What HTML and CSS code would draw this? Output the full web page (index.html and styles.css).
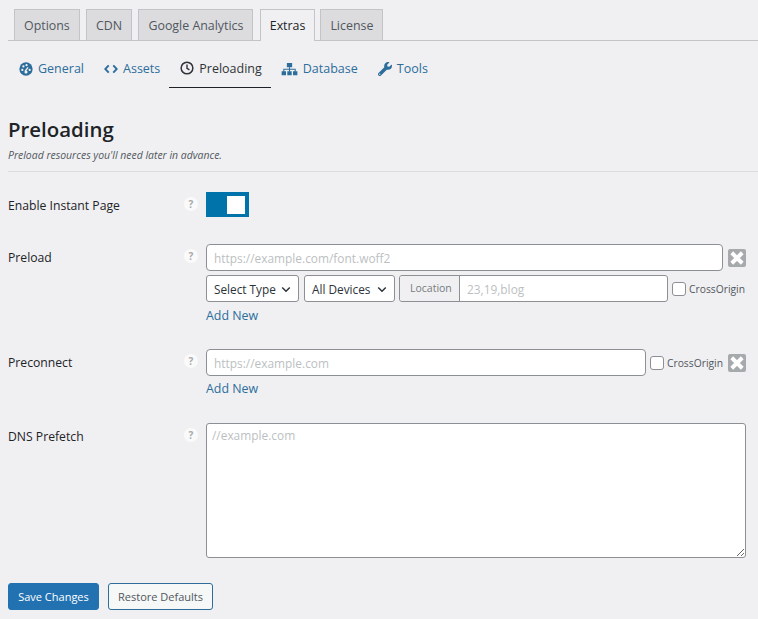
FILE: index.html
```html
<!DOCTYPE html>
<html>
<head>
  <meta charset="utf-8">
  <title>Preloading</title>
  <link rel="stylesheet" href="styles.css">
</head>
<body>
  <div class="tabs">
    <a class="tab">Options</a>
    <a class="tab">CDN</a>
    <a class="tab">Google Analytics</a>
    <a class="tab active">Extras</a>
    <a class="tab">License</a>
  </div>

  <div class="subnav">
    <a class="subnav-item">
      <svg class="icon" viewBox="0 0 16 16"><circle cx="8" cy="8" r="7.6" fill="currentColor"/><circle cx="3.800" cy="9" r="1.300" fill="#f0f0f1"/><circle cx="5" cy="5" r="1.300" fill="#f0f0f1"/><circle cx="8.600" cy="3.600" r="1.300" fill="#f0f0f1"/><circle cx="12.200" cy="9" r="1.300" fill="#f0f0f1"/><path d="M7 10.500l3.400-4.300" stroke="#f0f0f1" stroke-width="1.600"/><circle cx="8" cy="11.400" r="1.800" fill="#f0f0f1"/></svg>
      General
    </a>
    <a class="subnav-item">
      <svg class="icon" viewBox="0 0 16 16"><path d="M5.400 3.800L1.400 8l4 4.200M10.600 3.800l4 4.200-4 4.200" fill="none" stroke="currentColor" stroke-width="2.200"/></svg>
      Assets
    </a>
    <a class="subnav-item current">
      <svg class="icon" viewBox="0 0 16 16"><circle cx="8" cy="8" r="6.700" fill="none" stroke="currentColor" stroke-width="1.700"/><path d="M8 4v4.300l2.800 1.800" fill="none" stroke="currentColor" stroke-width="1.600"/></svg>
      Preloading
    </a>
    <a class="subnav-item">
      <svg class="icon icon-wide" viewBox="0 0 18 16"><path d="M6 1h6v5H6zM0 10.500h5V15H0zM6.500 10.500h5V15h-5zM13 10.500h5V15h-5z" fill="currentColor"/><path d="M2.500 11V8.200h13V11M9 6v5" fill="none" stroke="currentColor" stroke-width="1.200"/></svg>
      Database
    </a>
    <a class="subnav-item">
      <svg class="icon" viewBox="0 0 512 512"><path fill="currentColor" d="M507.73 109.1c-2.24-9.03-13.54-12.09-20.12-5.51l-74.36 74.36-67.88-11.31-11.31-67.88 74.36-74.36c6.62-6.62 3.43-17.9-5.66-20.16-47.38-11.74-99.55.91-136.58 37.93-39.64 39.64-50.55 97.1-34.05 147.2L18.74 402.76c-24.99 24.99-24.99 65.51 0 90.5 24.99 24.99 65.51 24.99 90.5 0l213.21-213.21c50.12 16.71 107.47 5.68 147.37-34.22 37.07-37.07 49.7-89.32 37.91-136.73zM64 472c-13.25 0-24-10.75-24-24 0-13.26 10.75-24 24-24s24 10.74 24 24c0 13.25-10.75 24-24 24z"/></svg>
      Tools
    </a>
  </div>

  <div class="section-head">
    <h2>Preloading</h2>
    <p>Preload resources you'll need later in advance.</p>
  </div>

  <div class="row row-toggle">
    <div class="row-label"><span>Enable Instant Page</span><i class="help">?</i></div>
    <div class="switch"><span class="knob"></span></div>
  </div>

  <div class="row row-preload">
    <div class="row-label"><span>Preload</span><i class="help">?</i></div>
    <div class="fields">
      <div class="line">
        <input class="text grow" type="text" placeholder="https://example.com/font.woff2">
        <span class="remove"><svg viewBox="0 0 12 12"><path d="M2.500 2.500l7 7M9.500 2.500l-7 7"/></svg></span>
      </div>
      <div class="line">
        <span class="select select-type">Select Type<svg viewBox="0 0 12 8"><path d="M1.500 1.500L6 6l4.500-4.500"/></svg></span>
        <span class="select select-device">All Devices<svg viewBox="0 0 12 8"><path d="M1.500 1.500L6 6l4.500-4.500"/></svg></span>
        <span class="location">
          <span class="location-label">Location</span>
          <input class="location-input" type="text" placeholder="23,19,blog">
        </span>
        <label class="cross"><span class="box"></span>CrossOrigin</label>
      </div>
      <a class="add">Add New</a>
    </div>
  </div>

  <div class="row row-preconnect">
    <div class="row-label"><span>Preconnect</span><i class="help">?</i></div>
    <div class="fields">
      <div class="line line-tight">
        <input class="text grow" type="text" placeholder="https://example.com">
        <label class="cross"><span class="box"></span>CrossOrigin</label>
        <span class="remove"><svg viewBox="0 0 12 12"><path d="M2.500 2.500l7 7M9.500 2.500l-7 7"/></svg></span>
      </div>
      <a class="add">Add New</a>
    </div>
  </div>

  <div class="row row-dns">
    <div class="row-label"><span>DNS Prefetch</span><i class="help">?</i></div>
    <textarea class="dns" placeholder="//example.com"></textarea>
  </div>

  <div class="actions">
    <button class="btn btn-primary">Save Changes</button>
    <button class="btn btn-secondary">Restore Defaults</button>
  </div>
</body>
</html>
```

FILE: styles.css
```css
* {
  box-sizing: border-box;
}

body {
  margin: 0;
  height: 619px;
  overflow: hidden;
  background: #f0f0f2;
  color: #3c434a;
  font-family: "Open Sans", "Noto Sans", sans-serif;
  font-size: 12.2px;
}

.tabs {
  display: flex;
  margin-left: 8px;
  padding: 9px 0 0 6px;
  height: 41px;
  border-bottom: 1px solid #c3c4c7;
}

.tab {
  height: 31px;
  margin-right: 6.3px;
  padding: 0 9px;
  line-height: 32px;
  background: #dcdcde;
  border: 1px solid #c3c4c7;
  border-bottom: none;
  color: #50575e;
  font-size: 12.4px;
}

.tab.active {
  height: 32px;
  margin: 0 5px 0 0;
  background: #f0f0f2;
  color: #1d2327;
  font-weight: 500;
}

.subnav {
  display: flex;
  height: 47px;
  padding-left: 9px;
}

.subnav-item {
  display: flex;
  align-items: center;
  gap: 5px;
  height: 47px;
  padding: 8px 10px 0;
  color: #2c6d9b;
  font-size: 12.5px;
}

.subnav-item.current {
  margin-left: -1px;
  padding: 8px 9px 0 11px;
  color: #2f3438;
  border-bottom: 1px solid #1d2327;
}

.icon {
  width: 14px;
  height: 14px;
  flex: none;
}

.icon-wide {
  width: 17px;
}

.section-head {
  margin: 0 0 0 8px;
  padding-top: 27px;
  height: 84px;
  border-bottom: 1px solid #dcdcde;
}

.section-head h2 {
  margin: 0;
  font-size: 20.4px;
  line-height: 28px;
  font-weight: 600;
  color: #1d2327;
}

.section-head p {
  margin: 5px 0 0;
  font-size: 10.45px;
  line-height: 14px;
  font-style: italic;
  color: #50575e;
}

.row {
  display: flex;
  padding-left: 8px;
}

.row-label {
  display: flex;
  justify-content: space-between;
  width: 190px;
  margin-right: 8px;
  flex: none;
  color: #1d2327;
  font-weight: 500;
  line-height: 28px;
}

.row-toggle {
  margin-top: 20px;
  height: 52px;
}

.row-preload {
  height: 105px;
}

.row-preconnect {
  height: 74px;
}

.row-dns {
  height: 160px;
}

.help {
  width: 14px;
  height: 14px;
  margin: 5px 0 0;
  border-radius: 50%;
  background: #fafafa;
  color: #a7aaad;
  font-size: 10px;
  font-style: normal;
  font-weight: 700;
  line-height: 14px;
  text-align: center;
}

.switch {
  display: flex;
  justify-content: flex-end;
  align-items: center;
  width: 43px;
  height: 25px;
  padding-right: 4px;
  background: #0073aa;
}

.knob {
  width: 18px;
  height: 18px;
  background: #fff;
}

.fields {
  display: flex;
  flex-direction: column;
  width: 540px;
}

.line {
  display: flex;
  align-items: center;
  margin-bottom: 4px;
  height: 27px;
}

.line-tight {
  margin-bottom: 3px;
}

input,
textarea {
  font-family: inherit;
  font-size: 11.9px;
  color: #2c3338;
  outline: none;
}

input::placeholder,
textarea::placeholder {
  color: #bcbfc2;
  opacity: 1;
}

.text {
  height: 27px;
  padding: 0 7px;
  background: #fff;
  border: 1px solid #8c8f94;
  border-radius: 4px;
}

.grow {
  flex: 1;
  min-width: 0;
}

.remove {
  display: flex;
  width: 18px;
  height: 18px;
  margin-left: 5px;
  background: #a7aaad;
  border-radius: 2px;
  flex: none;
}

.remove svg {
  width: 18px;
  height: 18px;
}

.remove path {
  fill: none;
  stroke: #fff;
  stroke-width: 2.600;
}

.select {
  display: flex;
  align-items: center;
  justify-content: space-between;
  height: 27px;
  margin-right: 5px;
  padding: 1px 7px 0;
  background: #fff;
  border: 1px solid #8c8f94;
  border-radius: 3px;
  color: #2c3338;
  font-size: 11.8px;
  flex: none;
}

.select svg {
  width: 10px;
  height: 7px;
}

.select path {
  fill: none;
  stroke: #2c3338;
  stroke-width: 1.800;
}

.select-type {
  width: 93px;
}

.select-device {
  width: 91px;
}

.location {
  display: flex;
  width: 269px;
  height: 27px;
  margin-left: -1px;
  background: #fff;
  border: 1px solid #8c8f94;
  border-radius: 3px;
  flex: none;
}

.location-label {
  width: 60px;
  padding-left: 10px;
  background: #f0f0f2;
  border-right: 1px solid #8c8f94;
  border-radius: 3px 0 0 3px;
  color: #777b80;
  font-size: 10.500px;
  line-height: 25px;
}

.location-input {
  flex: 1;
  min-width: 0;
  padding: 0 7px;
  border: none;
  background: transparent;
}

.cross {
  display: flex;
  align-items: center;
  margin-left: 4px;
  color: #50575e;
  font-size: 10.3px;
  white-space: nowrap;
}

.box {
  width: 14px;
  height: 14px;
  margin-right: 3px;
  background: #fff;
  border: 1px solid #8c8f94;
  border-radius: 3px;
  flex: none;
}

.add {
  color: #2c6d9b;
  font-size: 12.4px;
  line-height: 18px;
  margin-top: 1px;
}

.dns {
  width: 540px;
  height: 135px;
  padding: 3px 5px;
  background: #fff;
  border: 1px solid #8c8f94;
  border-radius: 3px;
  resize: both;
}

.actions {
  display: flex;
  gap: 9px;
  padding-left: 8px;
}

.btn {
  height: 27px;
  padding: 0;
  border-radius: 3px;
  font-family: inherit;
  font-size: 11px;
}

.btn-primary {
  width: 91px;
  background: #2271b1;
  border: 1px solid #2271b1;
  color: #fff;
}

.btn-secondary {
  width: 105px;
  background: #f6f7f7;
  border: 1px solid #2c6d9b;
  color: #50575e;
}
```
